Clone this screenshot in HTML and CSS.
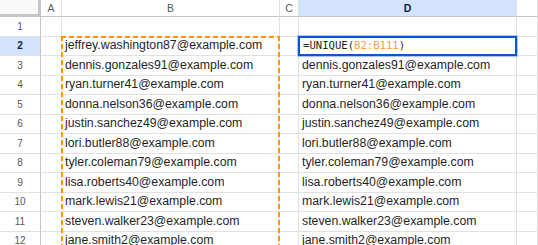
FILE: index.html
```html
<!DOCTYPE html>
<html lang="en">
<head>
    <meta charset="UTF-8">
    <title>Sheet</title>
    <link rel="stylesheet" href="styles.css">
</head>
<body>
<div class="sheet">
    <div class="row">
        <div class="corner"></div>
        <div class="ch">A</div>
        <div class="ch">B</div>
        <div class="ch">C</div>
        <div class="ch sel">D</div>
        <div class="ch"></div>
    </div>
    <div class="row">
        <div class="rh">1</div>
        <div class="c"></div><div class="c"></div><div class="c"></div><div class="c"></div><div class="c"></div>
    </div>
    <div class="row">
        <div class="rh sel">2</div>
        <div class="c"></div>
        <div class="c">jeffrey.washington87@example.com</div>
        <div class="c"></div>
        <div class="c active"><span class="formula">=UNIQUE(<span class="ref">B2:B111</span>)</span></div>
        <div class="c"></div>
    </div>
    <div class="row">
        <div class="rh">3</div>
        <div class="c"></div><div class="c">dennis.gonzales91@example.com</div><div class="c"></div><div class="c">dennis.gonzales91@example.com</div><div class="c"></div>
    </div>
    <div class="row">
        <div class="rh">4</div>
        <div class="c"></div><div class="c">ryan.turner41@example.com</div><div class="c"></div><div class="c">ryan.turner41@example.com</div><div class="c"></div>
    </div>
    <div class="row">
        <div class="rh">5</div>
        <div class="c"></div><div class="c">donna.nelson36@example.com</div><div class="c"></div><div class="c">donna.nelson36@example.com</div><div class="c"></div>
    </div>
    <div class="row">
        <div class="rh">6</div>
        <div class="c"></div><div class="c">justin.sanchez49@example.com</div><div class="c"></div><div class="c">justin.sanchez49@example.com</div><div class="c"></div>
    </div>
    <div class="row">
        <div class="rh">7</div>
        <div class="c"></div><div class="c">lori.butler88@example.com</div><div class="c"></div><div class="c">lori.butler88@example.com</div><div class="c"></div>
    </div>
    <div class="row">
        <div class="rh">8</div>
        <div class="c"></div><div class="c">tyler.coleman79@example.com</div><div class="c"></div><div class="c">tyler.coleman79@example.com</div><div class="c"></div>
    </div>
    <div class="row">
        <div class="rh">9</div>
        <div class="c"></div><div class="c">lisa.roberts40@example.com</div><div class="c"></div><div class="c">lisa.roberts40@example.com</div><div class="c"></div>
    </div>
    <div class="row">
        <div class="rh">10</div>
        <div class="c"></div><div class="c">mark.lewis21@example.com</div><div class="c"></div><div class="c">mark.lewis21@example.com</div><div class="c"></div>
    </div>
    <div class="row">
        <div class="rh">11</div>
        <div class="c"></div><div class="c">steven.walker23@example.com</div><div class="c"></div><div class="c">steven.walker23@example.com</div><div class="c"></div>
    </div>
    <div class="row">
        <div class="rh">12</div>
        <div class="c"></div><div class="c">jane.smith2@example.com</div><div class="c"></div><div class="c">jane.smith2@example.com</div><div class="c"></div>
    </div>
    <div class="copy-range"></div>
</div>
</body>
</html>
```

FILE: styles.css
```css
body {
    margin: 0;
    background: #fff;
    font-family: "Liberation Sans", Arial, sans-serif;
    overflow: hidden;
}

.sheet {
    position: relative;
    display: grid;
    grid-template-columns: 41px 21px 218px 19px 218px 1fr;
    grid-template-rows: 17px repeat(12, 19.5px);
    width: 538px;
    height: 245px;
    overflow: hidden;
}

.row {
    display: contents;
}

.corner {
    background: #f8f9fa;
    border-right: 3px solid #c4c7c5;
    border-bottom: 3px solid #c4c7c5;
}

.ch {
    display: flex;
    align-items: center;
    justify-content: center;
    border-right: 1px solid #e1e1e1;
    border-bottom: 1px solid #c4c7c5;
    font-size: 10.5px;
    color: #575a5e;
}

.ch.sel {
    background: #d3e3fd;
    color: #041e49;
    font-weight: bold;
}

.rh {
    display: flex;
    align-items: center;
    justify-content: center;
    border-right: 1px solid #c4c7c5;
    border-bottom: 1px solid #e1e1e1;
    font-size: 10px;
    color: #575a5e;
}

.rh.sel {
    background: #d3e3fd;
    color: #041e49;
    font-weight: bold;
}

.c {
    display: flex;
    align-items: flex-end;
    padding: 0 0 2px 3px;
    border-right: 1px solid #e1e1e1;
    border-bottom: 1px solid #e1e1e1;
    font-size: 12.3px;
    line-height: 15px;
    color: #1f1f1f;
    white-space: nowrap;
    overflow: hidden;
}

.c.active {
    position: relative;
    border: 2px solid #0b57d0;
    box-shadow: 0 0 0 1px #a8c7fa;
    margin: -1px 0 0 -1px;
    padding: 0 0 1px 3px;
    align-items: center;
    z-index: 2;
}

.formula {
    font-family: "DejaVu Sans Mono", "Liberation Mono", monospace;
    font-size: 10.6px;
    color: #1f1f1f;
}

.formula .ref {
    color: #f4a04e;
}

/* dashed copy marquee over B2:B12, drawn on top of the cells */
.copy-range {
    position: absolute;
    grid-column: 3 / 4;
    grid-row: 3 / 14;
    top: -1px;
    left: -1px;
    right: 0;
    bottom: 0;
    background:
        repeating-linear-gradient(90deg, #ff9800 0 5px, transparent 5px 8px) top left / 100% 2px no-repeat,
        repeating-linear-gradient(180deg, #ff9800 0 5px, transparent 5px 8px) top left / 2px 100% no-repeat,
        repeating-linear-gradient(180deg, #ff9800 0 5px, transparent 5px 8px) top right / 2px 100% no-repeat;
    pointer-events: none;
    z-index: 1;
}
```
